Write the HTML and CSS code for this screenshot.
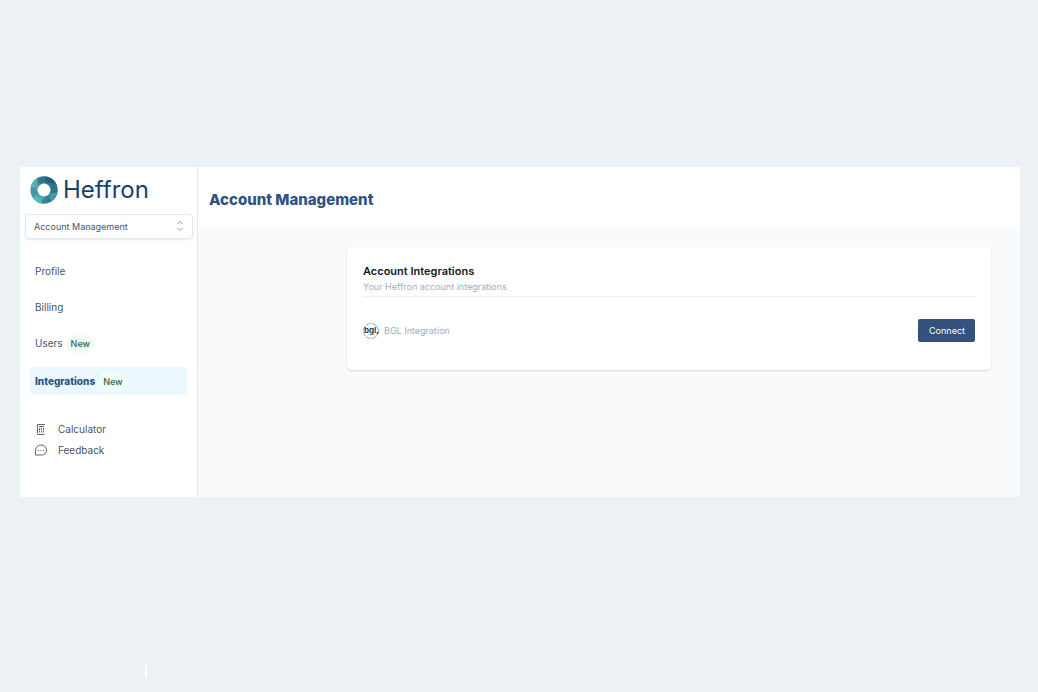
FILE: index.html
```html
<!doctype html>
<html lang="en">
<head>
    <meta charset="UTF-8">
    <meta name="viewport" content="width=device-width, initial-scale=1.0">
    <title>Account Management</title>

    <link rel="stylesheet" href="styles.css">
</head>
<body>

<div class="app">
    <aside class="sidebar">
        <div class="logo">
            <svg class="logo-mark" viewBox="0 0 28 28" aria-hidden="true">
                <defs>
                    <linearGradient id="ring" x1="0" y1="0.7" x2="1" y2="0.2">
                        <stop offset="0" stop-color="#5cb5b8"/>
                        <stop offset="0.5" stop-color="#3b8b9d"/>
                        <stop offset="1" stop-color="#235b7a"/>
                    </linearGradient>
                </defs>
                <circle cx="14" cy="14" r="13.700" fill="url(#ring)"/>
                <g opacity="0.6">
                    <path d="M7 2.500Q15-1 22 3Q15 3 10 9Q8 6 7 2.500Z" fill="#2b6985"/>
                    <path d="M16 .5Q25 2 27 10Q22 5 15 7Q15 3 16 .5Z" fill="#1f5274"/>
                    <path d="M25 6Q29 13 26 20Q25 14 20 11Q24 9 25 6Z" fill="#347b91"/>
                    <path d="M27 16Q26 24 18 27Q21 22 20 17Q24 18 27 16Z" fill="#55adb5"/>
                    <path d="M22 24Q15 30 7 26Q14 25 17 20Q20 23 22 24Z" fill="#32778f"/>
                    <path d="M12 27.500Q4 26 1 18Q6 22 12 20Q11 24 12 27.500Z" fill="#63bdbe"/>
                    <path d="M3 22Q-1 14 3 7Q3 13 8 17Q5 19 3 22Z" fill="#3c8b9e"/>
                    <path d="M1 12Q2 5 8 2Q6 7 8 12Q4 10 1 12Z" fill="#62bbbd"/>
                </g>
                <circle cx="14" cy="14" r="6.500" fill="#fff"/>
            </svg>
            <span class="logo-text">Heffron</span>
        </div>

        <div class="switcher">
            <select class="switcher-select" aria-label="Section">
                <option>Account Management</option>
            </select>
            <svg class="switcher-icon" viewBox="0 0 8 12" aria-hidden="true">
                <path d="M1.500 4L4 1.500L6.500 4M1.500 8L4 10.500L6.500 8"/>
            </svg>
        </div>

        <nav class="nav">
            <a class="nav-link" href="#">Profile</a>
            <a class="nav-link" href="#">Billing</a>
            <a class="nav-link" href="#">Users <span class="badge">New</span></a>
            <a class="nav-link active" href="#">Integrations <span class="badge">New</span></a>
        </nav>

        <div class="tools">
            <a class="tool" href="#">
                <svg class="tool-icon" viewBox="0 0 12 12" aria-hidden="true">
                    <path d="M2.500 10.500V1.500H10M4 3.500H9M2.500 11.500H9.500"/>
                    <path d="M4.500 5V10M6.500 5V10M8.500 5V10" stroke-dasharray="2 .5"/>
                </svg>
                Calculator
            </a>
            <a class="tool" href="#">
                <svg class="tool-icon" viewBox="0 0 12 12" aria-hidden="true">
                    <path d="M.5 11V6A5.500 5 0 0 1 11.500 6Q11.500 11 6 11Z"/>
                    <path d="M3 6.500H4M5.500 6.500H6.500M8 6.500H9"/>
                </svg>
                Feedback
            </a>
        </div>
    </aside>

    <main class="main">
        <header class="header">
            <h1 class="title">Account Management</h1>
        </header>

        <section class="card">
            <h2 class="card-title">Account Integrations</h2>
            <p class="card-text">Your Heffron account integrations</p>
            <div class="integration">
                <svg class="bgl" viewBox="0 0 16 16" aria-hidden="true">
                    <circle cx="8" cy="8" r="7.500" fill="#fff" stroke="#8fabbd" stroke-dasharray="5 1"/>
                    <path d="M10 15Q14 14 15 10" fill="none" stroke="#c8d79a"/>
                    <path d="M10 1Q14 2 15 6" fill="none" stroke="#8fd0df"/>
                    <text class="bgl-text" x="1" y="10">bgl</text>
                    <circle cx="14.500" cy="10" r="1" fill="#23435f"/>
                </svg>
                <span class="integration-name">BGL Integration</span>
                <button class="connect" type="button">Connect</button>
            </div>
        </section>
    </main>
</div>

<div class="caret"></div>

</body>
</html>
```
FILE: styles.css
```css
* {
    box-sizing: border-box;
}

body {
    margin: 0;
    padding: 167px 18px 0 20px;
    background: #ebf1f5;
    font-family: Inter, "Liberation Sans", sans-serif;
    font-size: 10px;
    line-height: 16px;
    color: #4a5568;
}

a {
    color: inherit;
    text-decoration: none;
}

.app {
    display: flex;
    min-height: 330px;
    background: #f9fafc;
}

.sidebar {
    flex: 0 0 178px;
    padding: 9px 4px 0 5px;
    background: #fff;
    border-right: 1px solid #e2e8f0;
}

.logo {
    display: flex;
    align-items: center;
    gap: 5px;
    height: 28px;
    padding-left: 5px;
}

.logo-mark {
    width: 28px;
    height: 28px;
}

.logo-text {
    font-size: 24px;
    line-height: 30px;
    color: #173f70;
}

.switcher {
    position: relative;
    margin-top: 10px;
}

.switcher-select {
    display: block;
    width: 100%;
    height: 25px;
    padding: 0 8px;
    appearance: none;
    background: #fff;
    border: 1px solid #e2e8f0;
    border-radius: 4px;
    box-shadow: 0 1px 2px rgba(0, 0, 0, 0.08);
    font: inherit;
    font-size: 9px;
    color: #4a5568;
}

.switcher-icon {
    position: absolute;
    top: 6px;
    right: 9px;
    width: 8px;
    height: 12px;
    fill: none;
    stroke: #8d9bb0;
    pointer-events: none;
}

.nav {
    display: flex;
    flex-direction: column;
    gap: 8px;
    padding: 18px 6px 0 5px;
}

.nav-link {
    display: flex;
    align-items: center;
    gap: 3px;
    height: 28px;
    padding: 0 5px;
    border-radius: 4px;
}

.nav-link.active {
    margin-top: 2px;
    background: #ebf8ff;
    color: #2c5282;
    font-weight: 800;
}

.badge {
    margin-top: 2px;
    padding: 0 5px;
    border-radius: 9px;
    background: #f0fff4;
    font-size: 9px;
    line-height: 18px;
    font-weight: 500;
    color: #276749;
}

.tools {
    display: flex;
    flex-direction: column;
    gap: 5px;
    padding: 26px 10px 0;
}

.tool {
    display: flex;
    align-items: center;
    gap: 11px;
}

.tool-icon {
    width: 12px;
    height: 12px;
    fill: none;
    stroke: #5c6b80;
}

.main {
    flex: 1;
    min-width: 0;
}

.header {
    display: flex;
    align-items: center;
    height: 60px;
    padding: 6px 11px 0;
    background: #fff;
}

.title {
    margin: 0;
    font-size: 15px;
    line-height: 20px;
    font-weight: 800;
    color: #2f5382;
}

.card {
    margin: 20px 29px 0 149px;
    padding: 16px 16px 28px;
    background: #fff;
    border-radius: 5px;
    box-shadow: 0 1px 2px rgba(0, 0, 0, 0.14);
}

.card-title {
    margin: 0;
    font-size: 11px;
    line-height: 16px;
    font-weight: 600;
    color: #171923;
}

.card-text {
    margin: 0;
    padding-bottom: 1px;
    border-bottom: 1px solid #edf0f4;
    font-size: 9px;
    color: #a0aec0;
}

.integration {
    display: flex;
    align-items: center;
    gap: 5px;
    margin-top: 22px;
}

.bgl {
    width: 16px;
    height: 16px;
}

.bgl-text {
    font-size: 8px;
    font-weight: 700;
    fill: #23435f;
}

.integration-name {
    font-size: 9px;
    color: #a0aec0;
}

.connect {
    height: 23px;
    margin-left: auto;
    padding: 0 10px 0 11px;
    border: 0;
    border-radius: 2px;
    background: #34517e;
    font: inherit;
    font-size: 9px;
    color: #fff;
}

.caret {
    width: 2px;
    height: 13px;
    margin: 168px 0 0 125px;
    background: #fff;
}
```
